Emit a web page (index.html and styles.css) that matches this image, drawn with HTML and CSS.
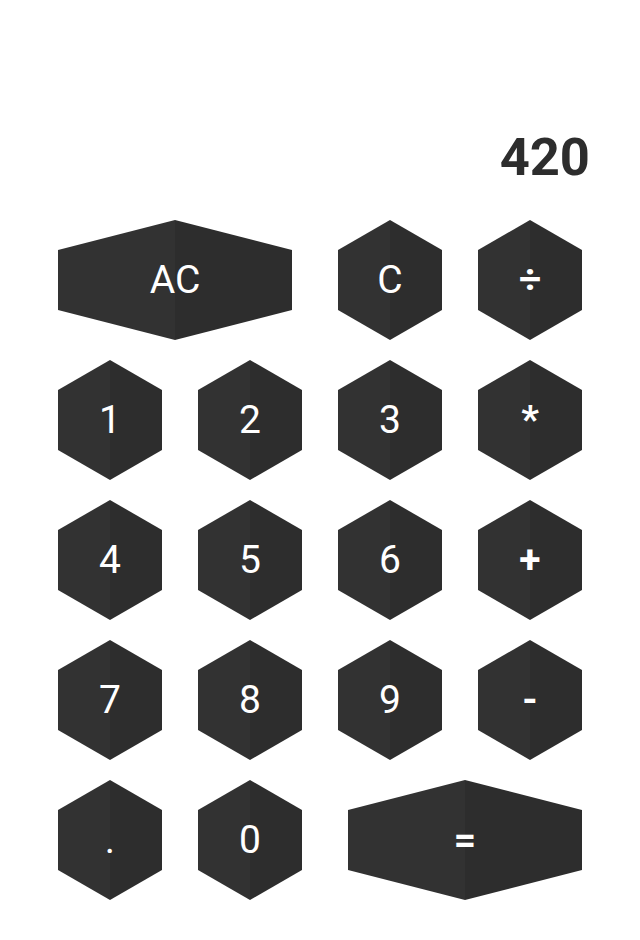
FILE: index.html
```html
<!DOCTYPE html>
<html>
<head>
<meta charset="utf-8">
<link rel="stylesheet" href="styles.css">
</head>
<body>
<div class="calc">
  <div class="display">420</div>
  <div class="keys">
    <button class="key wide">AC</button>
    <button class="key">C</button>
    <button class="key op">÷</button>
    <button class="key">1</button>
    <button class="key">2</button>
    <button class="key">3</button>
    <button class="key op">*</button>
    <button class="key">4</button>
    <button class="key">5</button>
    <button class="key">6</button>
    <button class="key op">+</button>
    <button class="key">7</button>
    <button class="key">8</button>
    <button class="key">9</button>
    <button class="key op">-</button>
    <button class="key">.</button>
    <button class="key">0</button>
    <button class="key op wide right">=</button>
  </div>
</div>
</body>
</html>
```
FILE: styles.css
```css
html, body {
  margin: 0;
  padding: 0;
  background: #ffffff;
}
body {
  font-family: Roboto, "Liberation Sans", sans-serif;
  width: 640px;
  height: 940px;
}
.calc {
  padding: 125px 50px 0 58px;
}
.display {
  text-align: right;
  font-weight: 700;
  font-size: 52.5px;
  line-height: 64px;
  color: #2d2d2d;
  margin-bottom: 31px;
}
.keys {
  display: grid;
  grid-template-columns: repeat(4, 104px);
  grid-auto-rows: 120px;
  column-gap: 36px;
  row-gap: 20px;
}
.key {
  width: 104px;
  height: 120px;
  border: 0;
  padding: 0;
  margin: 0;
  color: #ffffff;
  font-family: Roboto, "Liberation Sans", sans-serif;
  font-size: 39px;
  font-weight: 400;
  background: linear-gradient(to right, #323232 50%, #2d2d2d 50%);
  clip-path: polygon(50% 0, 100% 25%, 100% 75%, 50% 100%, 0 75%, 0 25%);
  display: flex;
  align-items: center;
  justify-content: center;
  cursor: pointer;
}
.key.op {
  font-weight: 700;
}
.key.wide {
  grid-column: span 2;
  width: 234px;
  justify-self: start;
}
.key.wide.right {
  justify-self: end;
}
```
